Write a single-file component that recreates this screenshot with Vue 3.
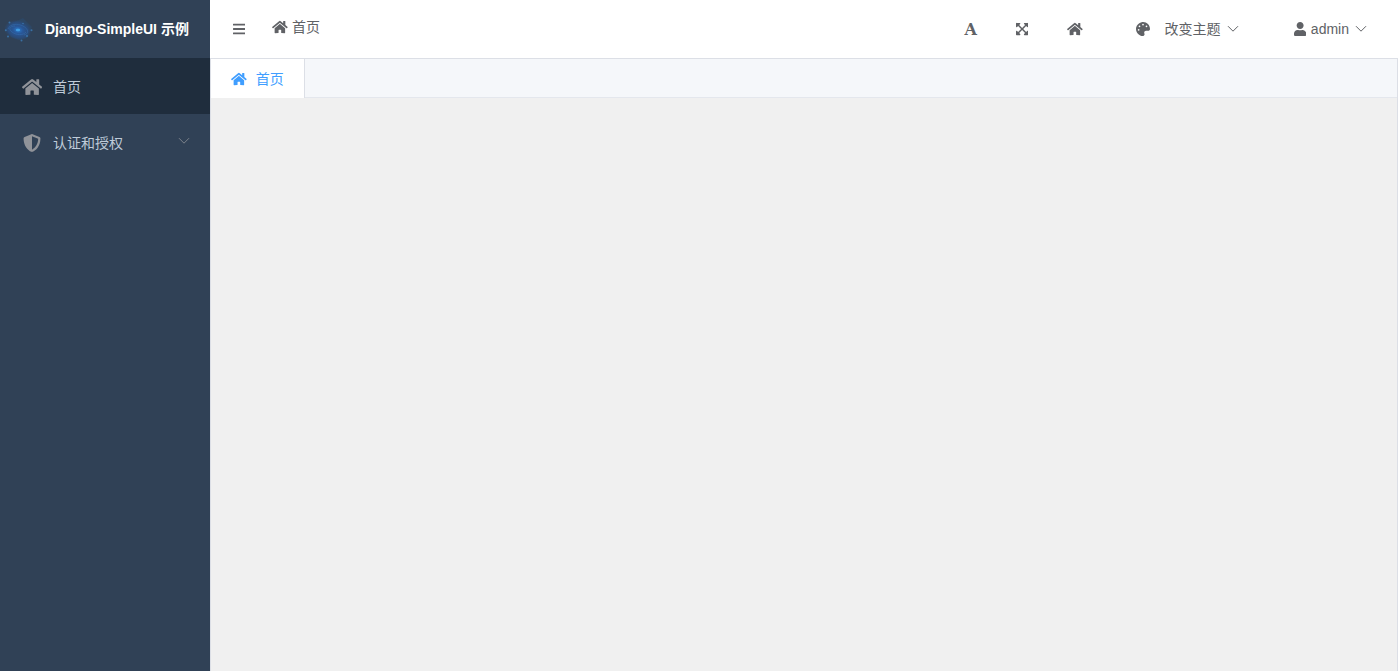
<script setup>
import { ref } from 'vue'

const icons = {
  home: {
    box: '0 0 576 512',
    d: 'M280.37 148.26L96 300.11V464a16 16 0 0 0 16 16l112.06-.29a16 16 0 0 0 15.92-16V368a16 16 0 0 1 16-16h64a16 16 0 0 1 16 16v95.64a16 16 0 0 0 16 16.05L464 480a16 16 0 0 0 16-16V300L295.67 148.26a12.19 12.19 0 0 0-15.3 0zM571.6 251.47L488 182.56V44.05a12 12 0 0 0-12-12h-56a12 12 0 0 0-12 12v72.61L318.47 43a48 48 0 0 0-61 0L4.34 251.47a12 12 0 0 0-1.6 16.9l25.5 31A12 12 0 0 0 45.15 301l235.22-193.74a12.19 12.19 0 0 1 15.3 0L530.9 301a12 12 0 0 0 16.9-1.6l25.5-31a12 12 0 0 0-1.7-16.93z'
  },
  shield: {
    box: '0 0 512 512',
    d: 'M466.5 83.7l-192-80a48.15 48.15 0 0 0-36.9 0l-192 80C27.7 91.1 16 108.6 16 128c0 198.5 114.5 335.7 221.5 380.3 11.8 4.9 25.1 4.9 36.9 0C360.1 472.6 496 349.3 496 128c0-19.4-11.7-36.9-29.5-44.3zM256.1 446.3l-.1-381 175.9 73.3c-3.3 151.4-82.1 261.1-175.8 307.7z'
  },
  expand: {
    box: '0 0 448 512',
    d: 'M448 344v112a23.94 23.94 0 0 1-24 24H312c-21.39 0-32.09-25.9-17-41l36.2-36.2L224 295.6 116.77 402.9 153 439c15.09 15.1 4.39 41-17 41H24a23.94 23.94 0 0 1-24-24V344c0-21.4 25.89-32.1 41-17l36.19 36.2L184.46 256 77.18 148.7 41 185c-15.1 15.1-41 4.4-41-17V56a23.94 23.94 0 0 1 24-24h112c21.39 0 32.09 25.9 17 41l-36.2 36.2L224 216.4l107.23-107.3L295 73c-15.09-15.1-4.39-41 17-41h112a23.94 23.94 0 0 1 24 24v112c0 21.4-25.89 32.1-41 17l-36.19-36.2L263.54 256l107.28 107.3L407 327.1c15.1-15.2 41-4.5 41 16.9z'
  },
  bars: {
    box: '0 0 448 512',
    d: 'M16 132h416a16 16 0 0 0 16-16V76a16 16 0 0 0-16-16H16A16 16 0 0 0 0 76v40a16 16 0 0 0 16 16zm0 160h416a16 16 0 0 0 16-16v-40a16 16 0 0 0-16-16H16a16 16 0 0 0-16 16v40a16 16 0 0 0 16 16zm0 160h416a16 16 0 0 0 16-16v-40a16 16 0 0 0-16-16H16a16 16 0 0 0-16 16v40a16 16 0 0 0 16 16z'
  },
  palette: {
    box: '0 0 512 512',
    d: 'M204.3 5C104.9 24.4 24.8 104.3 5.2 203.4c-37 187 131.7 326.4 258.8 306.7 41.2-6.4 61.4-54.6 42.5-91.7-23.1-45.4 9.9-98.4 60.9-98.4h79.7c35.8 0 64.8-29.6 64.9-65.3C511.5 97.1 368.1-26.9 204.3 5zM96 320c-17.7 0-32-14.3-32-32s14.3-32 32-32 32 14.3 32 32-14.3 32-32 32zm32-128c-17.7 0-32-14.3-32-32s14.3-32 32-32 32 14.3 32 32-14.3 32-32 32zm128-64c-17.7 0-32-14.3-32-32s14.3-32 32-32 32 14.3 32 32-14.3 32-32 32zm128 64c-17.7 0-32-14.3-32-32s14.3-32 32-32 32 14.3 32 32-14.3 32-32 32z'
  },
  user: {
    box: '0 0 448 512',
    d: 'M224 256c70.7 0 128-57.3 128-128S294.7 0 224 0 96 57.3 96 128s57.3 128 128 128zm89.6 32h-16.7c-22.2 10.2-46.9 16-72.9 16s-50.6-5.8-72.9-16h-16.7C60.2 288 0 348.2 0 422.4V464c0 26.5 21.5 48 48 48h352c26.5 0 48-21.5 48-48v-41.6c0-74.2-60.2-134.4-134.4-134.4z'
  }
}

const menus = [
  { name: '首页', icon: 'home', children: false },
  { name: '认证和授权', icon: 'shield', children: true }
]
const active = ref(0)
</script>

<template>
  <div class="layout">
    <aside class="sidebar">
      <div class="logo">
        <svg class="logo-img" viewBox="0 0 30 24">
          <defs>
            <radialGradient id="glow">
              <stop offset="0" stop-color="#2b7fd0" />
              <stop offset="0.35" stop-color="#29589a" />
              <stop offset="0.75" stop-color="#294f86" stop-opacity="0.7" />
              <stop offset="1" stop-color="#2b4a78" stop-opacity="0" />
            </radialGradient>
          </defs>
          <path d="M8 5L19 0l9 9-5 11-8 2-8-3-5-8z" fill="#28527f" opacity="0.35" />
          <ellipse cx="14" cy="12" rx="14" ry="10" fill="url(#glow)" transform="rotate(12 14 12)" />
          <g fill="none" stroke="#3a7cc4" stroke-width="0.8" opacity="0.45">
            <path d="M4 11c2-5 9-6 15-3s6 8 1 9" />
            <path d="M22 14c-3 4-10 3-14 0s-2-6 3-6" />
          </g>
          <ellipse cx="14" cy="12" rx="2.2" ry="1.2" fill="#3f9fe6" />
          <g fill="#3c80bd" opacity="0.75">
            <circle cx="5.5" cy="4.5" r="1" />
            <circle cx="1.8" cy="12.2" r="1" />
            <circle cx="4" cy="18.5" r="1" />
            <circle cx="17.5" cy="22.5" r="1" />
            <circle cx="23" cy="18" r="1" />
            <circle cx="27.5" cy="12.2" r="1" />
            <circle cx="19" cy="5.5" r="0.8" />
          </g>
        </svg>
        <span>Django-SimpleUI 示例</span>
      </div>
      <ul class="menu">
        <li v-for="(item, index) in menus" :key="item.name" class="menu-item" :class="{ active: index === active }" @click="active = index">
          <span class="menu-icon">
            <svg class="fa" :viewBox="icons[item.icon].box"><path :d="icons[item.icon].d" /></svg>
          </span>
          <span class="menu-text">{{ item.name }}</span>
          <svg v-if="item.children" class="arrow menu-arrow" viewBox="0 0 12 8"><path d="M1 1.2l5 5 5-5" /></svg>
        </li>
      </ul>
    </aside>

    <section class="main">
      <header class="navbar">
        <svg class="fa toggle" :viewBox="icons.bars.box"><path :d="icons.bars.d" /></svg>
        <div class="breadcrumb">
          <svg class="fa" :viewBox="icons.home.box"><path :d="icons.home.d" /></svg>
          <span>首页</span>
        </div>
        <div class="tools">
          <span class="font-btn">A</span>
          <svg class="fa expand" :viewBox="icons.expand.box"><path :d="icons.expand.d" /></svg>
          <svg class="fa home" :viewBox="icons.home.box"><path :d="icons.home.d" /></svg>
          <div class="theme">
            <svg class="fa" :viewBox="icons.palette.box"><path :d="icons.palette.d" /></svg>
            <span class="theme-text">改变主题</span>
            <svg class="arrow" viewBox="0 0 12 8"><path d="M1 1.2l5 5 5-5" /></svg>
          </div>
          <div class="user">
            <svg class="fa" :viewBox="icons.user.box"><path :d="icons.user.d" /></svg>
            <span class="user-name">admin</span>
            <svg class="arrow" viewBox="0 0 12 8"><path d="M1 1.2l5 5 5-5" /></svg>
          </div>
        </div>
      </header>
      <div class="tabs">
        <div class="tab-bar">
          <div class="tab">
            <svg class="fa" :viewBox="icons.home.box"><path :d="icons.home.d" /></svg>
            <span>首页</span>
          </div>
          <div class="tab-rest"></div>
        </div>
        <div class="content"></div>
      </div>
    </section>
  </div>
</template>

<style>
body {
  margin: 0;
  overflow: hidden;
}
</style>

<style scoped>
.layout {
  display: flex;
  height: 100vh;
  font-family: "Liberation Sans", "Noto Sans CJK SC", sans-serif;
  font-size: 14px;
  line-height: 20px;
  color: #606266;
}
.fa {
  display: block;
  height: 14px;
  flex: none;
  fill: currentColor;
}
.arrow {
  display: block;
  width: 12px;
  height: 8px;
  flex: none;
  fill: none;
  stroke: currentColor;
  stroke-width: 1;
}
.sidebar {
  width: 210px;
  flex: none;
  background-color: #304156;
}
.logo {
  display: flex;
  align-items: center;
  height: 58px;
  color: #fff;
  font-weight: bold;
  white-space: nowrap;
}
.logo-img {
  width: 30px;
  height: 24px;
  margin: 2px 11px 0 4px;
}
.menu {
  list-style: none;
  margin: 0;
  padding: 0;
}
.menu-item {
  display: flex;
  align-items: center;
  box-sizing: border-box;
  height: 56px;
  padding: 2px 20px 0;
  color: #bfcbd9;
  cursor: pointer;
}
.menu-item.active {
  background-color: #1f2d3d;
}
.menu-icon {
  display: flex;
  justify-content: center;
  width: 24px;
  margin-right: 9px;
  color: #909399;
}
.menu-icon .fa {
  height: 18px;
}
.menu-arrow {
  margin: -4px 0 0 auto;
  color: #909399;
  stroke-width: 0.8;
}
.main {
  display: flex;
  flex-direction: column;
  flex: 1;
}
.navbar {
  display: flex;
  align-items: center;
  height: 58px;
  padding: 0 31px 0 23px;
  background-color: #fff;
}
.breadcrumb {
  display: flex;
  align-items: center;
  gap: 4px;
  margin: -4px 0 0 27px;
}
.tools {
  display: flex;
  align-items: center;
  margin-left: auto;
}
.font-btn {
  width: 14px;
  padding-top: 1px;
  font-family: "DejaVu Serif", serif;
  font-size: 16px;
  font-weight: bold;
  text-align: center;
}
.expand {
  margin-left: 38px;
}
.home {
  margin-left: 39px;
}
.theme,
.user {
  display: flex;
  align-items: center;
}
.theme {
  margin-left: 53px;
}
.theme-text {
  margin: 0 6px 0 15px;
}
.user {
  margin-left: 56px;
}
.user-name {
  margin: 0 6px 0 5px;
}
.theme .arrow {
  margin-right: -1px;
}
.tabs {
  display: flex;
  flex-direction: column;
  flex: 1;
  border: 1px solid #dcdfe6;
  border-bottom: none;
}
.tab-bar {
  display: flex;
  height: 39px;
}
.tab {
  display: flex;
  align-items: center;
  gap: 9px;
  padding: 0 20px;
  background-color: #fff;
  border-right: 1px solid #dcdfe6;
  color: #409eff;
}
.tab-rest {
  flex: 1;
  background-color: #f5f7fa;
  border-bottom: 1px solid #e4e7ed;
}
.content {
  flex: 1;
  background-color: #f0f0f0;
}
</style>
